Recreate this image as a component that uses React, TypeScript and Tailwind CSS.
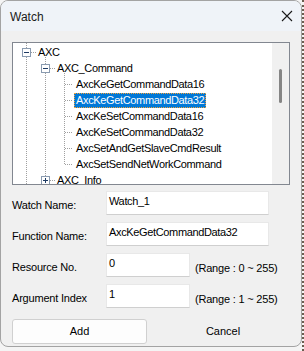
import React from "react";

type TreeRow = {
  label: string;
  level: 0 | 1 | 2;
  selected?: boolean;
};

const rows: TreeRow[] = [
  { label: "AXC", level: 0 },
  { label: "AXC_Command", level: 1 },
  { label: "AxcKeGetCommandData16", level: 2 },
  { label: "AxcKeGetCommandData32", level: 2, selected: true },
  { label: "AxcKeSetCommandData16", level: 2 },
  { label: "AxcKeSetCommandData32", level: 2 },
  { label: "AxcSetAndGetSlaveCmdResult", level: 2 },
  { label: "AxcSetSendNetWorkCommand", level: 2 },
  { label: "AXC_Info", level: 1 },
];

const indent = { 0: "pl-[23px]", 1: "pl-[42px]", 2: "pl-[61px]" };

const font = { fontFamily: '"Liberation Sans", Arial, sans-serif' };

const TreeLines = () => {
  const dot = { stroke: "#a0a0a0", strokeDasharray: "1 1" };
  const leafCenters = [41, 57, 73, 89, 105, 121];
  return (
    <svg
      className="absolute left-0 top-0 pointer-events-none"
      width="259"
      height="141"
      shapeRendering="crispEdges"
    >
      {/* root level */}
      <line x1="13.5" y1="0" x2="13.5" y2="5" {...dot} />
      <line x1="13.5" y1="14" x2="13.5" y2="141" {...dot} />
      <line x1="18" y1="9.5" x2="23" y2="9.5" {...dot} />
      {/* level 1 */}
      <line x1="32.5" y1="14" x2="32.5" y2="21" {...dot} />
      <line x1="32.5" y1="30" x2="32.5" y2="133" {...dot} />
      <line x1="37" y1="25.5" x2="42" y2="25.5" {...dot} />
      <line x1="37" y1="137.5" x2="42" y2="137.5" {...dot} />
      {/* leaves */}
      <line x1="51.5" y1="30" x2="51.5" y2="122" {...dot} />
      {leafCenters.map((y) => (
        <line key={y} x1="52" y1={y + 0.5} x2="60" y2={y + 0.5} {...dot} />
      ))}
      {/* expander boxes */}
      <rect x="9.5" y="5.5" width="8" height="8" fill="#fff" stroke="#8a9bb0" />
      <line x1="11" y1="9.5" x2="16" y2="9.5" stroke="#1f3b63" />
      <rect x="28.5" y="21.5" width="8" height="8" fill="#fff" stroke="#8a9bb0" />
      <line x1="30" y1="25.5" x2="35" y2="25.5" stroke="#1f3b63" />
      <rect x="28.5" y="133.5" width="8" height="8" fill="#fff" stroke="#8a9bb0" />
      <line x1="30" y1="137.5" x2="35" y2="137.5" stroke="#1f3b63" />
      <line x1="32.5" y1="135" x2="32.5" y2="140" stroke="#1f3b63" />
    </svg>
  );
};

const FormRow: React.FC<{
  label: string;
  value: string;
  short?: boolean;
  range?: string;
}> = ({ label, value, short, range }) => (
  <div className="flex items-start">
    <div className="w-[94px] pt-[8px] text-[11px] leading-[13px] text-black tracking-[-0.2px]">
      {label}
    </div>
    <div
      className={`${short ? "w-[84px]" : "w-[163px]"} h-[24px] bg-white border border-[#e8e8e8] border-b-[#cfcfcf] pl-[2px] pt-[3px] text-[11px] leading-[13px] tracking-[-0.35px] text-black`}
    >
      {value}
    </div>
    {range && (
      <div className="pl-[5px] pt-[9px] text-[11px] leading-[13px] tracking-[-0.2px] text-black">
        {range}
      </div>
    )}
  </div>
);

export default function App() {
  return (
    <div
      className="w-[304px] h-[351px] bg-[#f4f4f4] border-r-2 border-dotted border-[#6b5d50] overflow-hidden"
      style={font}
    >
      <div className="w-[302px] h-[347px] rounded-[8px] border border-[#a3a3a3] bg-[#f0f0f0] overflow-hidden flex flex-col">
        <div className="h-[30px] bg-[#eff3f8] flex items-center justify-between pl-[9px] pr-[8px]">
          <span className="text-[12px] text-[#1a1a1a] pt-[1px]">Watch</span>
          <svg width="12" height="12" viewBox="0 0 12 12">
            <path d="M1 1 L11 11 M11 1 L1 11" stroke="#1a1a1a" strokeWidth="1.1" />
          </svg>
        </div>

        <div className="flex flex-col px-[11px] pt-[11px]">
          <div className="w-[278px] h-[143px] border border-[#828790] bg-white flex">
            <div className="relative flex-1 overflow-hidden pt-[1px] text-[11px] tracking-[-0.35px] text-black">
              <TreeLines />
              {rows.map((r) => (
                <div key={r.label} className={`h-[16px] flex items-center ${indent[r.level]}`}>
                  {r.selected ? (
                    <span className="h-[15px] leading-[13px] px-[1px] bg-[#0078d7] text-white border border-dotted border-[#f0a23c]">
                      {r.label}
                    </span>
                  ) : (
                    <span className="leading-[13px] px-[2px]">{r.label}</span>
                  )}
                </div>
              ))}
            </div>
            <div className="w-[17px] bg-[#f0f0f0] flex justify-center">
              <div className="w-[3px] h-[34px] mt-[26px] bg-[#858585] rounded-full" />
            </div>
          </div>

          <div className="flex flex-col gap-[7px] mt-[6px]">
            <FormRow label="Watch Name:" value="Watch_1" />
            <FormRow label="Function Name:" value="AxcKeGetCommandData32" />
            <FormRow label="Resource No." value="0" short range="(Range : 0 ~ 255)" />
            <FormRow label="Argument Index" value="1" short range="(Range : 1 ~ 255)" />
          </div>

          <div className="flex gap-[9px] mt-[11px]">
            <button className="w-[135px] h-[25px] bg-[#fdfdfd] border border-[#d0d0d0] rounded-[3px] text-[11px] text-black">
              Add
            </button>
            <button className="w-[134px] h-[25px] text-[11px] text-black">Cancel</button>
          </div>
        </div>
      </div>
    </div>
  );
}
